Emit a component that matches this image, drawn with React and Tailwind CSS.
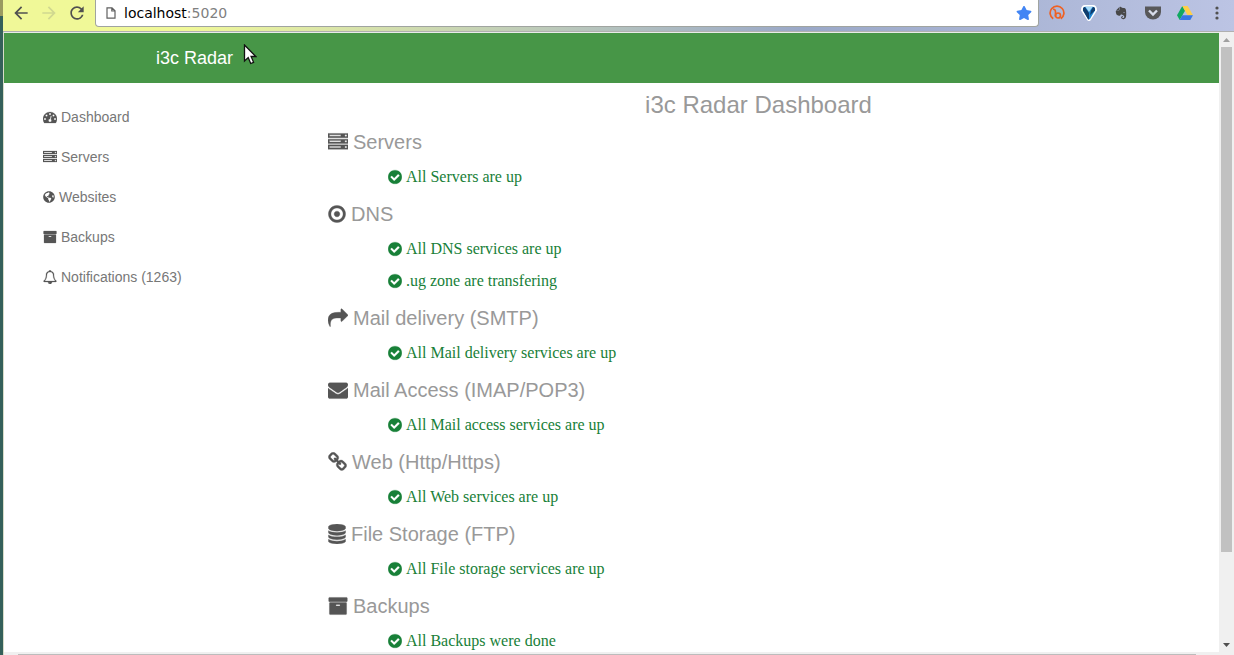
import { FaGlobeAmericas, FaStar, FaEvernote } from "react-icons/fa";
import { MdArrowBack, MdArrowForward, MdRefresh } from "react-icons/md";

const glyphs = {
  check: "M1412 734q0-28-18-46l-91-90q-19-19-45-19t-45 19l-408 407-226-226q-19-19-45-19t-45 19l-91 90q-18 18-18 46 0 27 18 45l362 362q19 19 45 19 27 0 46-19l543-543q18-18 18-45zm252 162q0 209-103 385.5t-279.5 279.5-385.5 103-385.5-103-279.5-279.5-103-385.5 103-385.5 279.5-279.5 385.5-103 385.5 103 279.5 279.5 103 385.5z",
  share: "M1792 640q0 26-19 45l-512 512q-19 19-45 19t-45-19-19-45v-256h-224q-98 0-175.5 6t-154 21.5-133 42.5-105.5 69.5-80 101-48.5 138.5-17.5 181q0 55 5 123 0 6 2.5 23.5t2.5 26.5q0 15-8.5 25t-23.5 10q-16 0-28-17-7-9-13-22t-13.5-30-10.5-24q-127-285-127-451 0-199 53-333 162-403 875-403h224v-256q0-26 19-45t45-19 45 19l512 512q19 19 19 45z",
  envelope: "M1792 710v794q0 66-47 113t-113 47h-1472q-66 0-113-47t-47-113v-794q44 49 101 87 362 246 497 345 57 42 92.5 65.5t94.5 48 110 24.5h2q51 0 110-24.5t94.5-48 92.5-65.5q170-123 498-345 57-39 100-87zm0-294q0 79-49 151t-122 123q-376 261-468 325-10 7-42.5 31t-54 38.5-52 32.5-57.5 27-50 9h-2q-23 0-50-9t-57.5-27-52-32.5-54-38.5-42.5-31q-91-64-262-182.5t-205-142.5q-62-42-117-115.5t-55-136.5q0-78 41.5-130t118.5-52h1472q65 0 112.5 47t47.5 113z",
  target: "M1152 896q0 106-75 181t-181 75-181-75-75-181 75-181 181-75 181 75 75 181zm-256-544q-148 0-273 73t-198 198-73 273 73 273 198 198 273 73 273-73 198-198 73-273-73-273-198-198-273-73zm768 544q0 209-103 385.5t-279.5 279.5-385.5 103-385.5-103-279.5-279.5-103-385.5 103-385.5 279.5-279.5 385.5-103 385.5 103 279.5 279.5 103 385.5z",
  database: "M896 768q237 0 443-43t325-127v170q0 69-103 128t-280 93.5-385 34.5-385-34.5-280-93.5-103-128v-170q119 84 325 127t443 43zm0 768q237 0 443-43t325-127v170q0 69-103 128t-280 93.5-385 34.5-385-34.5-280-93.5-103-128v-170q119 84 325 127t443 43zm0-384q237 0 443-43t325-127v170q0 69-103 128t-280 93.5-385 34.5-385-34.5-280-93.5-103-128v-170q119 84 325 127t443 43zm0-1152q208 0 385 34.5t280 93.5 103 128v128q0 69-103 128t-280 93.5-385 34.5-385-34.5-280-93.5-103-128v-128q0-69 103-128t280-93.5 385-34.5z",
  archive: "M1088 832q0-26-19-45t-45-19h-256q-26 0-45 19t-19 45 19 45 45 19h256q26 0 45-19t19-45zm576-192v960q0 26-19 45t-45 19h-1408q-26 0-45-19t-19-45v-960q0-26 19-45t45-19h1408q26 0 45 19t19 45zm64-448v256q0 26-19 45t-45 19h-1536q-26 0-45-19t-19-45v-256q0-26 19-45t45-19h1536q26 0 45 19t19 45z",
  gauge: "M384 1152q0-53-37.5-90.5t-90.5-37.5-90.5 37.5-37.5 90.5 37.5 90.5 90.5 37.5 90.5-37.5 37.5-90.5zm192-448q0-53-37.5-90.5t-90.5-37.5-90.5 37.5-37.5 90.5 37.5 90.5 90.5 37.5 90.5-37.5 37.5-90.5zm428 481l101-382q6-26-7.5-48.5t-38.5-29.5-48 6.5-30 39.5l-101 382q-60 5-107 43.5t-63 98.5q-20 77 20 146t117 89 146-20 89-117q16-60-6-117t-72-91zm660-33q0-53-37.5-90.5t-90.5-37.5-90.5 37.5-37.5 90.5 37.5 90.5 90.5 37.5 90.5-37.5 37.5-90.5zm-640-640q0-53-37.5-90.5t-90.5-37.5-90.5 37.5-37.5 90.5 37.5 90.5 90.5 37.5 90.5-37.5 37.5-90.5zm448 192q0-53-37.5-90.5t-90.5-37.5-90.5 37.5-37.5 90.5 37.5 90.5 90.5 37.5 90.5-37.5 37.5-90.5zm320 448q0 261-141 483-19 29-54 29h-1402q-35 0-54-29-141-221-141-483 0-182 71-348t191-286 286-191 348-71 348 71 286 191 191 286 71 348z",
  server: "M128 1408h1024v-128h-1024v128zm0-512h1024v-128h-1024v128zm1568 448q0-40-28-68t-68-28-68 28-28 68 28 68 68 28 68-28 28-68zm-1568-960h1024v-128h-1024v128zm1568 448q0-40-28-68t-68-28-68 28-28 68 28 68 68 28 68-28 28-68zm0-512q0-40-28-68t-68-28-68 28-28 68 28 68 68 28 68-28 28-68zm96 832v384h-1792v-384h1792zm0-512v384h-1792v-384h1792zm0-512v384h-1792v-384h1792z",
  link: "M1520 1216q0-40-28-68l-208-208q-28-28-68-28-42 0-72 32 3 3 19 18.5t21.5 21.5 15 19 13 25.5 3.5 27.5q0 40-28 68t-68 28q-15 0-27.5-3.5t-25.5-13-19-15-21.5-21.5-18.5-19q-33 31-33 73 0 40 28 68l206 207q27 27 68 27 40 0 68-26l147-146q28-28 28-67zm-703-705q0-40-28-68l-206-207q-28-28-68-28-39 0-68 27l-147 146q-28 28-28 67 0 40 28 68l208 208q27 27 68 27 42 0 72-31-3-3-19-18.5t-21.5-21.5-15-19-13-25.5-3.5-27.5q0-40 28-68t68-28q15 0 27.5 3.5t25.5 13 19 15 21.5 21.5 18.5 19q33-31 33-73zm895 705q0 120-85 203l-147 146q-83 83-203 83-121 0-204-85l-206-207q-83-83-83-203 0-123 88-209l-88-88q-86 88-208 88-120 0-204-84l-208-208q-84-84-84-204t85-203l147-146q83-83 203-83 121 0 204 85l206 207q83 83 83 203 0 123-88 209l88 88q86-88 208-88 120 0 204 84l208 208q84 84 84 204z",
  bell: "M912 1696q0-16-16-16-59 0-101.5-42.5t-42.5-101.5q0-16-16-16t-16 16q0 73 51.5 124.5t124.5 51.5q16 0 16-16zm-666-288h1300q-266-300-266-832 0-51-24-105t-69-103-121.5-80.5-169.5-31.5-169.5 31.5-121.5 80.5-69 103-24 105q0 532-266 832zm1482 0q0 52-38 90t-90 38h-448q0 106-75 181t-181 75-181-75-75-181h-448q-52 0-90-38t-38-90q50-42 91-88t85-119.5 74.5-158.5 50-206 19.5-260q0-152 117-282.5t307-158.5q-8-19-8-39 0-40 28-68t68-28 68 28 28 68q0 20-8 39 190 28 307 158.5t117 282.5q0 139 19.5 260t50 206 74.5 158.5 85 119.5 91 88z",
};

// Glyphs share a 1792-unit em; narrow ones are centred and trimmed to `units`.
function Glyph({ name, units = 1792, className }) {
  return (
    <svg viewBox={`${(1792 - units) / 2} 0 ${units} 1792`} className={`shrink-0 ${className}`} fill="currentColor" stroke="currentColor" strokeWidth="30" aria-hidden="true">
      <path d={glyphs[name]} />
    </svg>
  );
}

const nav = [
  { label: "Dashboard", icon: <Glyph name="gauge" className="h-3.5 w-3.5" /> },
  { label: "Servers", icon: <Glyph name="server" className="h-3.5 w-3.5" /> },
  { label: "Websites", icon: <FaGlobeAmericas className="h-3 w-3" /> },
  { label: "Backups", icon: <Glyph name="archive" className="h-3.5 w-3.5" /> },
  { label: "Notifications (1263)", icon: <Glyph name="bell" className="h-3.5 w-3.5" /> },
];

const sections = [
  { title: "Servers", icon: <Glyph name="server" className="h-5 w-5" />, items: ["All Servers are up"] },
  { title: "DNS", icon: <Glyph name="target" units={1536} className="h-5 w-[18px]" />, items: ["All DNS services are up", ".ug zone are transfering"] },
  { title: "Mail delivery (SMTP)", icon: <Glyph name="share" className="h-5 w-5" />, items: ["All Mail delivery services are up"] },
  { title: "Mail Access (IMAP/POP3)", icon: <Glyph name="envelope" className="h-5 w-5" />, items: ["All Mail access services are up"] },
  { title: "Web (Http/Https)", icon: <Glyph name="link" units={1664} className="h-5 w-[19px]" />, items: ["All Web services are up"] },
  { title: "File Storage (FTP)", icon: <Glyph name="database" units={1536} className="h-5 w-[18px]" />, items: ["All File storage services are up"] },
  { title: "Backups", icon: <Glyph name="archive" className="h-5 w-5" />, items: ["All Backups were done"] },
];

function Toolbar() {
  return (
    <header className="flex h-8 shrink-0 items-start border-b border-[#b0b0b0] bg-linear-to-r from-[#f0f898] from-15% via-[#9aa8c8] via-65% to-[#bcc4e4] pl-2">
      <div className="flex h-[26px] items-center gap-2 pr-2">
        <button aria-label="Back" className="text-[#505050]"><MdArrowBack className="h-5 w-5" /></button>
        <button aria-label="Forward" className="text-[#d0d890]"><MdArrowForward className="h-5 w-5" /></button>
        <button aria-label="Reload" className="text-[#505050]"><MdRefresh className="h-5 w-5" /></button>
      </div>
      <div className="flex h-[27px] min-w-0 flex-1 items-center rounded-b-sm border border-t-0 border-[#a0a4a0] bg-white pr-1.5 pl-2.5">
        <svg viewBox="0 0 10 12" className="h-3 w-2.5 shrink-0" fill="none" stroke="#606060" strokeWidth="1.2" aria-hidden="true">
          <path d="M1 .8h5l3 3v7.4H1zM5.8 1v3H9" />
        </svg>
        <div className="ml-2 flex-1 font-['DejaVu_Sans',sans-serif] text-sm text-[#808080]">
          <span className="text-black">localhost</span>:5020
        </div>
        <button aria-label="Bookmark" className="text-[#4285f4]"><FaStar className="h-4 w-4" /></button>
      </div>
      <div className="flex h-[26px] items-center gap-4 pr-[9px] pl-2.5">
        <button aria-label="Bitly">
          <svg viewBox="0 0 16 16" className="h-4 w-4" fill="none" stroke="#ee6123" strokeWidth="1.7">
            <path d="M4.200 13.800A6.900 6.900 0 1 1 11.800 13.800" />
            <path d="M4 4.300c2-.3 2.500 1 2.500 3v4.200" />
            <circle cx="9" cy="10.500" r="2.500" />
          </svg>
        </button>
        <button aria-label="Vysor">
          <svg viewBox="0 0 16 16" className="h-4 w-4">
            <path d="M6.500 15.500 0 5.500Q0 0 4 0h8q4 0 4 5.500l-6.500 10q-1.500 1-3 0z" fill="#fff" />
            <path d="M7.200 14.300 2 5.500Q1.500 2 4.500 1.800h7Q14.500 2 14 5.500l-5.200 8.800z" fill="#2185d0" />
            <path d="M2 5.500Q1.500 2 4 2L8 8v6.500h-.8zM14 5.500Q14.500 2 12 2l-2 3.500L9 10z" fill="#103c6c" />
            <path d="M4.500 2h7L8 7z" fill="#a8dcf8" />
          </svg>
        </button>
        <button aria-label="Evernote" className="text-[#484848]"><FaEvernote className="h-4 w-4 p-px" /></button>
        <button aria-label="Pocket">
          <svg viewBox="0 0 16 16" className="h-4 w-4">
            <path d="M0 1.500h16V7a8 7.500 0 0 1-16 0z" fill="#58585a" />
            <path d="m4 5.500 4 4 4-4" fill="none" stroke="#d8dcea" strokeWidth="2.400" />
          </svg>
        </button>
        <button aria-label="Drive">
          <svg viewBox="0 0 16 16" className="h-4 w-4">
            <path d="M5.300 1 0 10.200 2.700 15 8 5.700z" fill="#11a861" />
            <path d="M5.300 1h5.400L16 10.200h-5.400z" fill="#ffcf48" />
            <path d="M5.400 10.200H16L13.300 15H2.700z" fill="#3777e3" />
          </svg>
        </button>
        <button aria-label="Menu">
          <svg viewBox="0 0 16 16" className="h-4 w-4" fill="#505050">
            <circle cx="8" cy="3" r="1.600" /><circle cx="8" cy="8" r="1.600" /><circle cx="8" cy="13" r="1.600" />
          </svg>
        </button>
      </div>
    </header>
  );
}

function Sidebar() {
  return (
    <nav className="w-[294px] shrink-0 px-[39px] pt-3.5">
      <ul>
        {nav.map((n) => (
          <li key={n.label}>
            <a href="#" className="flex h-10 items-center gap-1 text-sm text-[#777]">
              <span className="text-[#555]">{n.icon}</span>
              {n.label}
            </a>
          </li>
        ))}
      </ul>
    </nav>
  );
}

function Status({ text }) {
  return (
    <li className="flex h-8 items-center gap-1 font-['Liberation_Serif',serif] text-base text-[#188038]">
      <Glyph name="check" units={1536} className="h-4 w-3.5" />
      {text}
    </li>
  );
}

export default function App() {
  return (
    <div className="flex h-screen overflow-hidden bg-white font-['Liberation_Sans',sans-serif]">
      <div className="w-[3px] shrink-0 bg-linear-to-b from-[#9a9a60] from-[16px] to-[#35605a] to-[16px]" />
      <div className="flex min-w-0 flex-1 flex-col">
        <Toolbar />
        <div className="flex min-h-0 flex-1">
          <div className="flex min-w-0 flex-1 flex-col border-l border-[#d8dcc8]">
            <div className="min-h-0 flex-1 overflow-hidden border-t border-[#e8ece8]">
              <div className="flex h-[50px] items-center bg-[#479647] pl-[152px] text-lg text-white">
                <a href="#">i3c Radar</a>
                <svg viewBox="0 0 14 21" className="mb-2 ml-2.5 h-[21px] w-3.5" aria-hidden="true">
                  <path d="M1.500 1v16l3.700-3.500 2.500 6 2.900-1.200-2.500-5.800h4.700z" fill="#fff" stroke="#111" strokeWidth="1.300" />
                </svg>
              </div>
              <div className="flex">
                <Sidebar />
                <main className="min-w-0 flex-1 pt-1.5">
                  <h1 className="text-center text-2xl text-[#999]">i3c Radar Dashboard</h1>
                  {sections.map((s) => (
                    <section key={s.title} className="pl-[30px]">
                      <h2 className="flex h-10 items-center gap-[5px] pt-0.5 text-xl text-[#999]">
                        <span className="text-[#555]">{s.icon}</span>
                        {s.title}
                      </h2>
                      <ul className="pl-[60px]">
                        {s.items.map((t) => <Status key={t} text={t} />)}
                      </ul>
                    </section>
                  ))}
                </main>
              </div>
            </div>
            <div className="h-[3px] shrink-0 bg-[#f0f0f0] pt-0.5 pr-[23px] pl-3.5">
              <div className="h-px bg-[#bcbcbc]" />
            </div>
          </div>
          <div className="flex w-[15px] shrink-0 flex-col items-center bg-[#f0f0f0]">
            <svg viewBox="0 0 7 4" className="mt-1.5 mb-[5px] h-1 w-[7px] shrink-0" fill="#a0a0a0" aria-hidden="true"><path d="M3.500 0 7 4H0z" /></svg>
            <div className="w-[11px] flex-[505] bg-[#c1c1c1]" />
            <div className="flex-[91]" />
            <svg viewBox="0 0 7 4" className="mb-2 h-1 w-[7px] shrink-0" fill="#505050" aria-hidden="true"><path d="M0 0h7L3.500 4z" /></svg>
          </div>
        </div>
      </div>
    </div>
  );
}
